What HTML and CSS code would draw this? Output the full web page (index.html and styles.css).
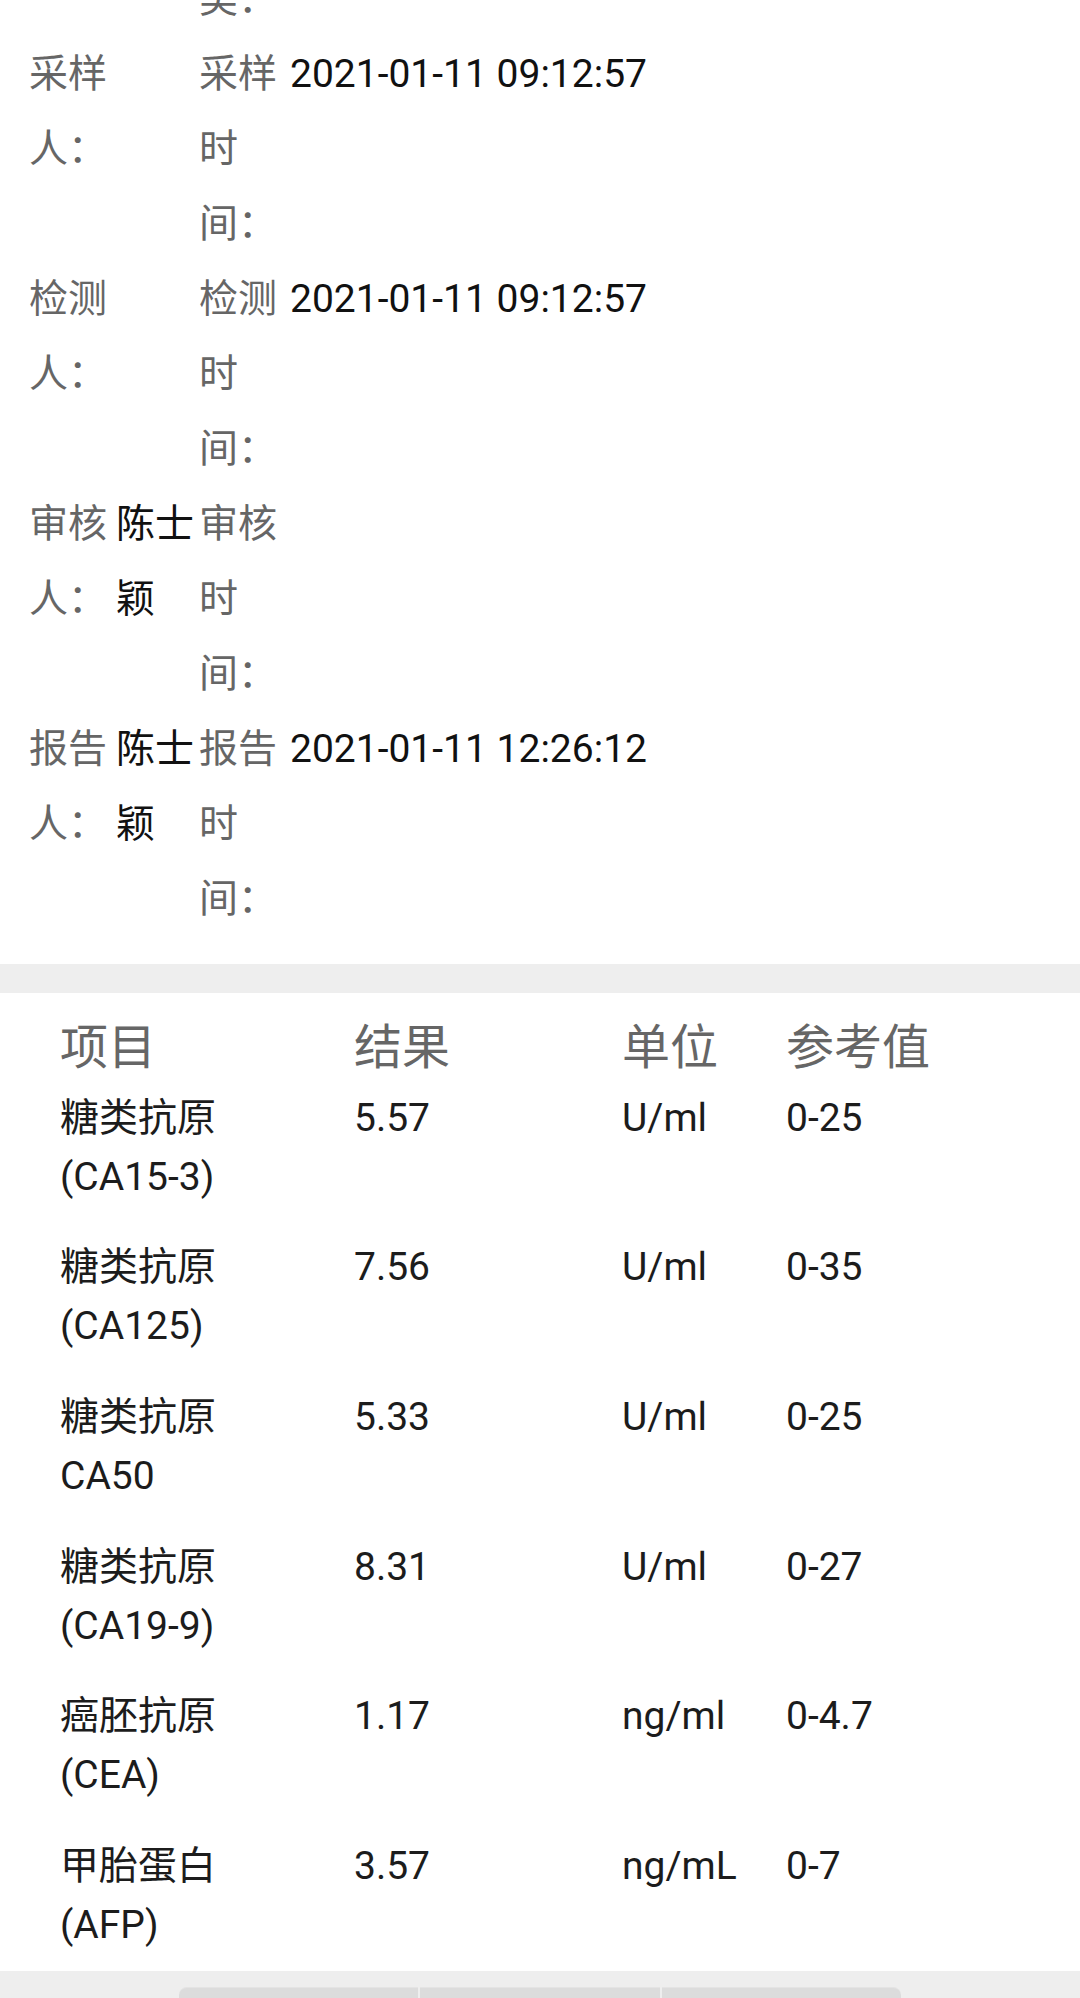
FILE: index.html
```html
<!DOCTYPE html>
<html lang="zh-CN">
<head>
<meta charset="utf-8">
<title>检验报告</title>
<link rel="stylesheet" href="styles.css">
</head>
<body>
<section class="info">
  <div class="row">
    <div class="lab"></div><div class="val"></div><div class="lab">类：</div><div class="val"></div>
  </div>
  <div class="row">
    <div class="lab">采样人：</div><div class="val"></div><div class="lab">采样时间：</div><div class="val">2021-01-11 09:12:57</div>
  </div>
  <div class="row">
    <div class="lab">检测人：</div><div class="val"></div><div class="lab">检测时间：</div><div class="val">2021-01-11 09:12:57</div>
  </div>
  <div class="row">
    <div class="lab">审核人：</div><div class="val">陈士颖</div><div class="lab">审核时间：</div><div class="val"></div>
  </div>
  <div class="row">
    <div class="lab">报告人：</div><div class="val">陈士颖</div><div class="lab">报告时间：</div><div class="val">2021-01-11 12:26:12</div>
  </div>
</section>

<section class="results">
  <div class="thead">
    <div>项目</div><div>结果</div><div>单位</div><div>参考值</div>
  </div>
  <div class="trow">
    <div class="name">糖类抗原(CA15-3)</div><div>5.57</div><div>U/ml</div><div>0-25</div>
  </div>
  <div class="trow">
    <div class="name">糖类抗原(CA125)</div><div>7.56</div><div>U/ml</div><div>0-35</div>
  </div>
  <div class="trow">
    <div class="name">糖类抗原CA50</div><div>5.33</div><div>U/ml</div><div>0-25</div>
  </div>
  <div class="trow">
    <div class="name">糖类抗原(CA19-9)</div><div>8.31</div><div>U/ml</div><div>0-27</div>
  </div>
  <div class="trow">
    <div class="name">癌胚抗原(CEA)</div><div>1.17</div><div>ng/ml</div><div>0-4.7</div>
  </div>
  <div class="trow">
    <div class="name">甲胎蛋白(AFP)</div><div>3.57</div><div>ng/mL</div><div>0-7</div>
  </div>
</section>

<footer class="footer">
  <div class="btns">
    <div class="btn first"></div><div class="btn"></div><div class="btn last"></div>
  </div>
</footer>
</body>
</html>
```
FILE: styles.css
```css
html, body {
  margin: 0;
  padding: 0;
}
body {
  background: #eeeeee;
  font-family: Roboto, "Noto Sans CJK SC", sans-serif;
  overflow: hidden;
}
.info {
  background: #ffffff;
  margin-top: -38px;
  padding: 0 0 26.5px 29px;
  font-size: 39px;
  line-height: 75px;
}
.row {
  display: grid;
  grid-template-columns: 87px 83px 91px 1fr;
}
.lab {
  color: #666666;
}
.val {
  color: #111111;
}
.results {
  background: #ffffff;
  margin-top: 29px;
  padding: 25.5px 0 0 60px;
}
.thead,
.trow {
  display: grid;
  grid-template-columns: 294px 268px 164px 1fr;
}
.thead {
  font-size: 48px;
  line-height: 59px;
  color: #666666;
  margin-bottom: -1.5px;
}
.trow {
  font-size: 39px;
  line-height: 59px;
  color: #1c1c1c;
  padding: 13px 0 18.7px;
}
.trow:last-child {
  padding-bottom: 16.2px;
}
.name {
  padding-right: 74px;
}
.footer {
  padding-top: 16px;
  display: flex;
  justify-content: center;
  height: 60px;
}
.btns {
  display: flex;
  gap: 2px;
  width: 722px;
}
.btn {
  flex: 1;
  height: 44px;
  background: #dcdcdc;
  border-top: 1px solid #e4e4e4;
}
.btn.first {
  border-top-left-radius: 8px;
}
.btn.last {
  border-top-right-radius: 8px;
}
```
